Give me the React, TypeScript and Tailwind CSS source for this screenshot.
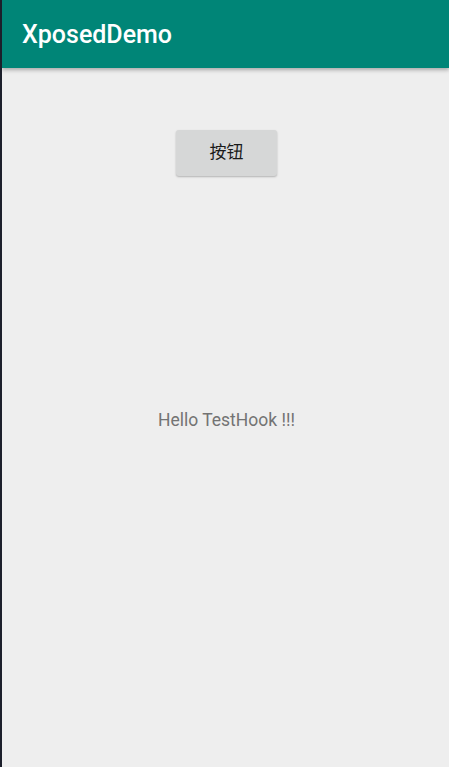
export default function App() {
  return (
    <div
      className="flex h-[767px] w-[449px] overflow-hidden border-l-2 border-[#1c1f2b] bg-[#eeeeee]"
      style={{ fontFamily: "Roboto, 'Noto Sans CJK SC', sans-serif" }}
    >
      <div className="flex flex-1 flex-col">
        <header className="relative z-10 flex h-[68px] items-center bg-[#008577] pl-[20px] pt-[2px] shadow-[0_2px_4px_rgba(0,0,0,0.3)]">
          <h1 className="text-[25px] font-medium text-white">XposedDemo</h1>
        </header>
        <main className="flex flex-1 flex-col items-center">
          <button className="ml-[2px] mt-[62px] h-[46px] w-[101px] rounded-[3px] bg-[#d6d7d7] text-[17px] text-[#1a1a1a] shadow-[0_1px_2px_rgba(0,0,0,0.25)]">
            按钮
          </button>
          <p className="ml-[2px] mt-[231px] text-[17.5px] text-[#737373]">Hello TestHook !!!</p>
        </main>
      </div>
    </div>
  );
}
